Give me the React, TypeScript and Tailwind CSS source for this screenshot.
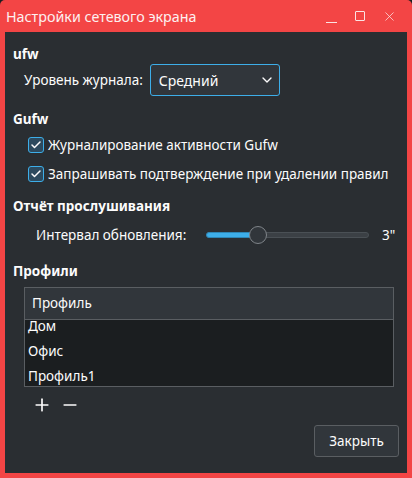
import { Check, ChevronDown, Minus, Plus, X } from 'lucide-react'

const font = { fontFamily: '"Noto Sans", "DejaVu Sans", sans-serif' }

function CheckRow({ label }: { label: string }) {
  return (
    <label className="flex items-center gap-[4px] h-[22px]">
      <span className="w-[16px] h-[16px] rounded-[3px] border border-[#3daee9] bg-[#2d4a5e] flex items-center justify-center">
        <Check className="w-[12px] h-[12px] text-[#fcfcfc]" strokeWidth={3} />
      </span>
      <span>{label}</span>
    </label>
  )
}

export default function App() {
  const profiles = ['Дом', 'Офис', 'Профиль1']

  return (
    <div className="w-[412px] h-[478px] bg-[#1b1e20] text-[13.5px] text-[#fcfcfc]" style={font}>
      <div className="w-full h-full flex flex-col bg-[#f34545] rounded-t-[5px] px-[5px] pb-[5px]">
        {/* Title bar */}
        <div className="h-[32px] flex items-center justify-between pl-[1px] pr-[10px] shrink-0">
          <span className="text-[14.3px] text-[#fdf0f0] pt-[2px]">Настройки сетевого экрана</span>
          <div className="flex items-center gap-[17px] text-[#fbe3e3]">
            <span className="w-[11px] h-[11px] flex items-end">
              <span className="block w-[11px] h-[1px] bg-[#fbe3e3] mb-[-1px]" />
            </span>
            <span className="w-[11px] h-[11px] flex items-center justify-center">
              <span className="block w-[10px] h-[10px] border border-[#fbe3e3] rounded-[1px]" />
            </span>
            <X className="w-[15px] h-[15px]" strokeWidth={1.2} />
          </div>
        </div>

        {/* Content */}
        <div className="flex-1 bg-[#2a2e32] flex flex-col pl-[8px] pr-[8px] pt-[13px]">
          <div className="font-bold leading-[18px]">ufw</div>
          <div className="flex items-center gap-[7px] pl-[11px] h-[34px]">
            <span>Уровень журнала:</span>
            <div className="w-[130px] h-[32px] rounded-[3px] border border-[#3daee9] bg-[#31363b] flex items-center justify-between pl-[8px] pr-[4px]">
              <span className="text-[14px]">Средний</span>
              <ChevronDown className="w-[16px] h-[16px]" strokeWidth={2} />
            </div>
          </div>

          <div className="font-bold leading-[18px] mt-[13px]">Gufw</div>
          <div className="flex flex-col gap-[7px] pl-[15px] mt-[6px]">
            <CheckRow label="Журналирование активности Gufw" />
            <CheckRow label="Запрашивать подтверждение при удалении правил" />
          </div>

          <div className="font-bold leading-[18px] mt-[12px]">Отчёт прослушивания</div>
          <div className="flex items-center pl-[23px] mt-[7px] h-[26px]">
            <span className="w-[170px]">Интервал обновления:</span>
            <div className="relative w-[163px] h-[18px] flex items-center">
              <div className="w-full h-[6px] rounded-full bg-[#3b4045] border border-[#4a5055]" />
              <div className="absolute left-0 top-[6px] w-[54px] h-[6px] rounded-full bg-[#3daee9] border border-[#2e86b5]" />
              <div className="absolute left-[43px] top-0 w-[18px] h-[18px] rounded-full bg-[#31363b] border border-[#7f8489]" />
            </div>
            <span className="ml-[13px]">3"</span>
          </div>

          <div className="font-bold leading-[18px] mt-[14px]">Профили</div>
          <div className="ml-[11px] mr-[5px] mt-[7px] h-[100px] border border-[#5a5e62] flex flex-col">
            <div className="h-[32px] shrink-0 bg-[#31363b] border-b border-[#5a5e62] flex items-center pl-[7px]">
              Профиль
            </div>
            <div className="flex-1 bg-[#1b1e20] overflow-hidden">
              <div className="mt-[-6px]">
                {profiles.map((p) => (
                  <div key={p} className="h-[25px] flex items-center pl-[3px]">
                    {p}
                  </div>
                ))}
              </div>
            </div>
          </div>

          <div className="flex items-center gap-[8px] pl-[19px] mt-[7px] h-[22px]">
            <Plus className="w-[20px] h-[20px]" strokeWidth={2} />
            <Minus className="w-[20px] h-[20px]" strokeWidth={2} />
          </div>

          <div className="flex justify-end mt-[9px]">
            <button className="w-[85px] h-[32px] rounded-[3px] border border-[#5a5e62] bg-[#31363b] text-[#fcfcfc]">
              Закрыть
            </button>
          </div>
        </div>
      </div>
    </div>
  )
}
